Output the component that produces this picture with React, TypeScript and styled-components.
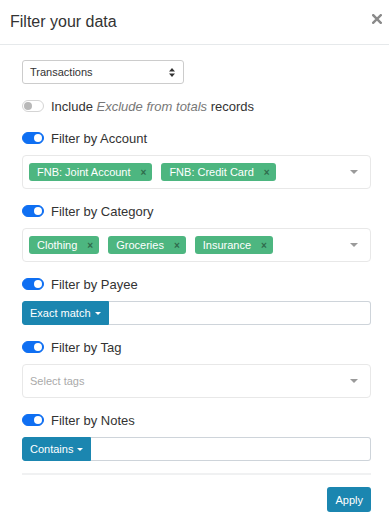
import React from 'react';
import styled, { createGlobalStyle } from 'styled-components';

const GlobalStyle = createGlobalStyle`
  body {
    margin: 0;
    background: #fff;
    font-family: "Liberation Sans", Arial, sans-serif;
    color: #333;
  }
`

const Modal = styled.div`
  width: 389px;
  height: 521px;
  background: #fff;
`

const Header = styled.div`
  height: 45px;
  border-bottom: 1px solid #e6e9eb;
  display: flex;
  justify-content: space-between;
  align-items: flex-start;
  padding: 12px 7px 0 10px;
  box-sizing: border-box;
`

const Title = styled.h4`
  margin: 0;
  font-size: 16px;
  line-height: 20px;
  font-weight: 400;
  color: #333;
`

const Close = styled.button`
  border: 0;
  background: none;
  padding: 0;
  margin-top: 2px;
  width: 10px;
  height: 10px;
  display: flex;
  cursor: pointer;
`

const Body = styled.div`
  padding: 15px 18px 0 22px;
`

const Select = styled.div`
  width: 162px;
  height: 24px;
  box-sizing: border-box;
  border: 1px solid #ccc;
  border-radius: 3px;
  display: flex;
  align-items: center;
  justify-content: space-between;
  padding: 0 8px 0 7px;
  font-size: 11px;
  color: #333;
  margin-bottom: 12px;
`

const Row = styled.label<{ $tight?: boolean }>`
  display: flex;
  align-items: center;
  height: 20px;
  gap: 7px;
  font-size: 13px;
  color: #333;
  margin-bottom: ${p => (p.$tight ? '7px' : '12px')};
`

const Switch = styled.span<{ $on?: boolean }>`
  width: 22px;
  height: 12px;
  box-sizing: border-box;
  border-radius: 6px;
  display: flex;
  align-items: center;
  padding: 0 1px;
  justify-content: ${p => (p.$on ? 'flex-end' : 'flex-start')};
  background: ${p => (p.$on ? '#0f6ff2' : '#fff')};
  border: 1px solid ${p => (p.$on ? '#0f6ff2' : '#d4d4d4')};
  &::after {
    content: '';
    width: 8px;
    height: 8px;
    border-radius: 50%;
    background: ${p => (p.$on ? '#fff' : '#b8b8b8')};
  }
`

const Muted = styled.em`
  color: #777;
`

const Box = styled.div`
  height: 34px;
  box-sizing: border-box;
  border: 1px solid #e8e8e8;
  border-radius: 4px;
  display: flex;
  align-items: center;
  padding: 0 12px 0 6px;
  margin-bottom: 12px;
`

const Tags = styled.div`
  flex: 1;
  display: flex;
  gap: 9px;
`

const Tag = styled.span`
  height: 18px;
  display: inline-flex;
  align-items: center;
  background: #4db680;
  color: #fff;
  font-size: 11px;
  border-radius: 3px;
  padding: 0 6px 0 8px;
  gap: 10px;
`

const TagX = styled.span`
  font-size: 10px;
  font-weight: 700;
  color: #2f6b4c;
`

const Placeholder = styled.span`
  flex: 1;
  font-size: 11px;
  color: #aaa;
  padding-left: 1px;
`

const Caret = styled.span<{ $light?: boolean }>`
  width: 0;
  height: 0;
  border-left: ${p => (p.$light ? '3px' : '4px')} solid transparent;
  border-right: ${p => (p.$light ? '3px' : '4px')} solid transparent;
  border-top: ${p => (p.$light ? '3px' : '4px')} solid ${p => (p.$light ? '#fff' : '#9a9a9a')};
`

const InputGroup = styled.div<{ $last?: boolean }>`
  display: flex;
  height: 24px;
  margin-bottom: ${p => (p.$last ? '0' : '12px')};
`

const GroupButton = styled.button`
  display: flex;
  align-items: center;
  gap: 4px;
  background: #1b86b0;
  color: #fff;
  border: 1px solid #1b86b0;
  border-radius: 3px 0 0 3px;
  font-family: inherit;
  font-size: 11px;
  padding: 0 7px;
  white-space: nowrap;
`

const GroupInput = styled.input`
  flex: 1;
  min-width: 0;
  border: 1px solid #ced4da;
  border-left: 0;
  border-radius: 0 3px 3px 0;
  outline: none;
`

const Divider = styled.div`
  height: 2px;
  background: #f0f1f2;
  margin-top: 12px;
`

const Footer = styled.div`
  display: flex;
  justify-content: flex-end;
  margin-top: 12px;
`

const Apply = styled.button`
  height: 25px;
  padding: 0 8px;
  background: #1b86b0;
  color: #fff;
  border: 0;
  border-radius: 3px;
  font-family: inherit;
  font-size: 11px;
`

const Toggle = ({ label, on = true }: { label: React.ReactNode; on?: boolean }) => (
  <Row $tight={on}>
    <Switch $on={on} />
    <span>{label}</span>
  </Row>
)

const TagBox = ({ tags, placeholder }: { tags?: string[]; placeholder?: string }) => (
  <Box>
    {tags ? (
      <Tags>
        {tags.map(t => (
          <Tag key={t}>
            {t}
            <TagX>×</TagX>
          </Tag>
        ))}
      </Tags>
    ) : (
      <Placeholder>{placeholder}</Placeholder>
    )}
    <Caret />
  </Box>
)

const App: React.FC = () => {
  return (
    <Modal>
      <GlobalStyle />
      <Header>
        <Title>Filter your data</Title>
        <Close aria-label="close">
          <svg width="10" height="10" viewBox="0 0 10 10">
            <path d="M1.2 1.2 L8.8 8.8 M8.8 1.2 L1.2 8.8" stroke="#8a8a8a" strokeWidth="2.4" strokeLinecap="square" />
          </svg>
        </Close>
      </Header>
      <Body>
        <Select>
          <span>Transactions</span>
          <svg width="6" height="9" viewBox="0 0 6 9">
            <path d="M0 3.5 L3 0 L6 3.5 Z M0 5.5 L3 9 L6 5.5 Z" fill="#333" />
          </svg>
        </Select>
        <Toggle on={false} label={<>Include <Muted>Exclude from totals</Muted> records</>} />

        <Toggle label="Filter by Account" />
        <TagBox tags={['FNB: Joint Account', 'FNB: Credit Card']} />

        <Toggle label="Filter by Category" />
        <TagBox tags={['Clothing', 'Groceries', 'Insurance']} />

        <Toggle label="Filter by Payee" />
        <InputGroup>
          <GroupButton>Exact match <Caret $light /></GroupButton>
          <GroupInput />
        </InputGroup>

        <Toggle label="Filter by Tag" />
        <TagBox placeholder="Select tags" />

        <Toggle label="Filter by Notes" />
        <InputGroup $last>
          <GroupButton>Contains <Caret $light /></GroupButton>
          <GroupInput />
        </InputGroup>

        <Divider />
        <Footer>
          <Apply>Apply</Apply>
        </Footer>
      </Body>
    </Modal>
  );
};

export default App;
